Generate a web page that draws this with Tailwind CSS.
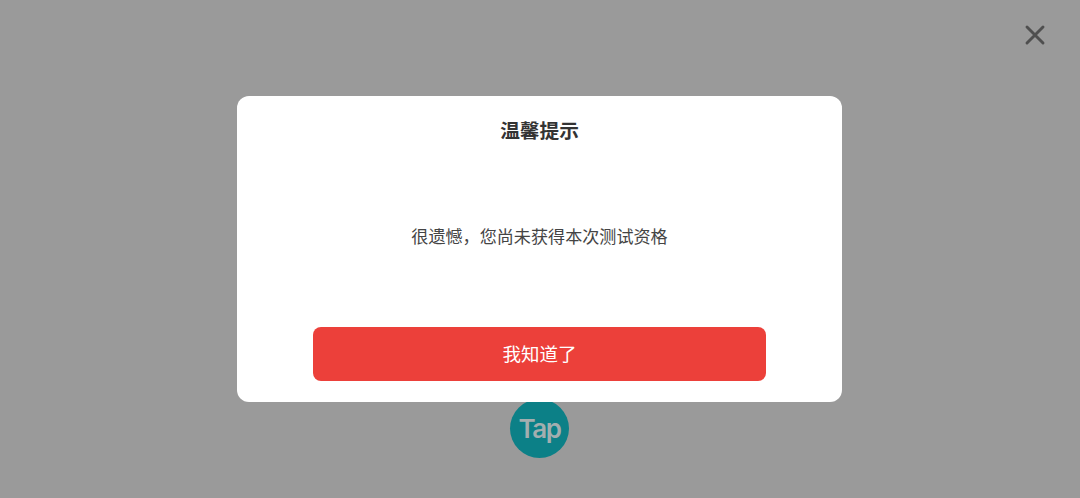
<!DOCTYPE html>
<html lang="zh-CN">
<head>
    <meta charset="UTF-8">
    <meta name="viewport" content="width=device-width, initial-scale=1.0">
    <title>温馨提示</title>
    <script src="https://cdn.jsdelivr.net/npm/@tailwindcss/browser@4"></script>
</head>
<body class="bg-[#9a9a9a] font-['Noto_Sans_CJK_SC','Noto_Sans',sans-serif] antialiased">
    <div class="relative h-[498px] w-[1080px] overflow-hidden flex flex-col items-center pt-[96px] pr-[1px]">
        <!-- close -->
        <button class="absolute top-[23px] right-[33px] w-6 h-6 flex items-center justify-center">
            <svg viewBox="0 0 24 24" class="w-6 h-6" fill="none" stroke="#4f4f4f" stroke-width="2.9" stroke-linecap="round">
                <path d="M4 4 L20 20 M20 4 L4 20"/>
            </svg>
        </button>

        <!-- dialog -->
        <div class="relative z-10 w-[605px] h-[306px] bg-white rounded-[12px] flex flex-col items-center">
            <h1 class="mt-[20px] h-[28px] leading-[28px] text-[19.7px] font-bold text-[#333333]">温馨提示</h1>
            <p class="mt-[80px] h-[24px] leading-[24px] text-[17.1px] text-[#444444]">很遗憾，您尚未获得本次测试资格</p>
            <button class="mt-[79px] w-[453px] h-[54px] bg-[#ec403a] rounded-[8px] text-white text-[18.5px]">我知道了</button>
        </div>

        <!-- logo -->
        <div class="-mt-[3px] w-[59px] h-[59px] rounded-full bg-[#0c8087] flex items-center justify-center">
            <span class="font-['Inter',sans-serif] font-semibold text-[26px] tracking-[-1.5px] text-[#a3aeaf]">Tap</span>
        </div>
    </div>
</body>
</html>
